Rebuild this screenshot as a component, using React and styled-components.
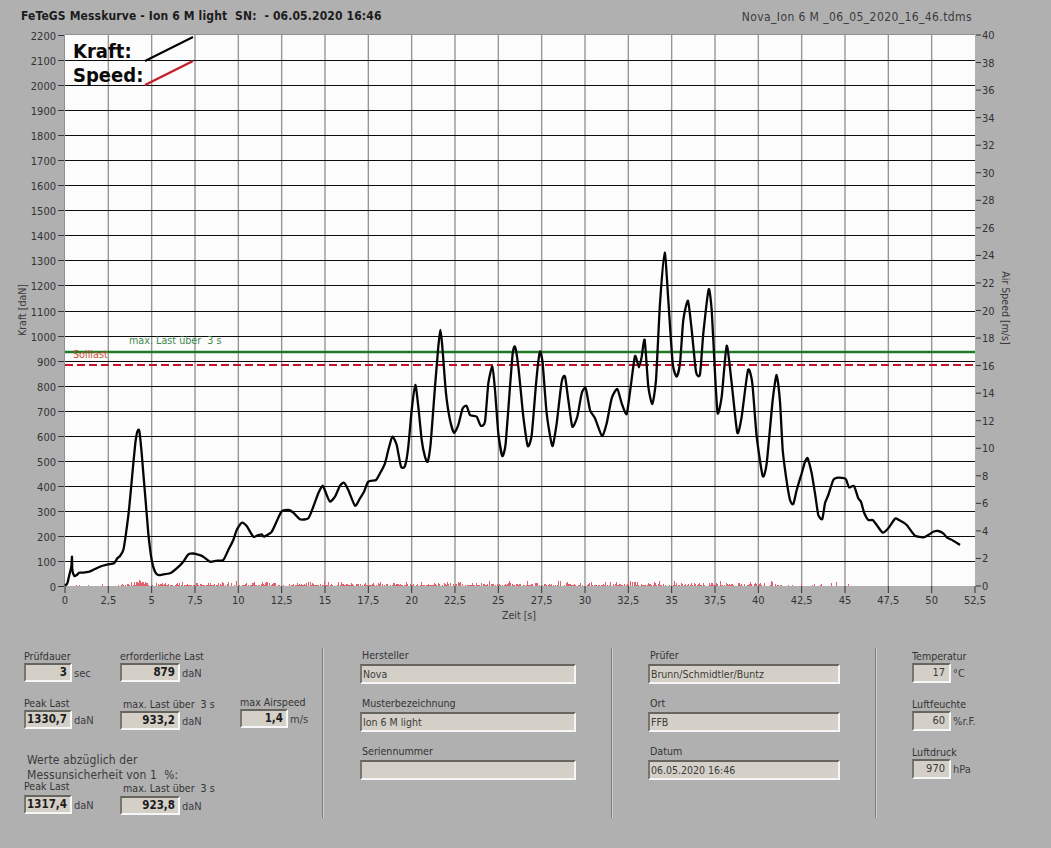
import React from "react";
import styled, { createGlobalStyle } from "styled-components";

const FONT = `"DejaVu Sans Condensed", "DejaVu Sans", Tahoma, sans-serif`;

const Global = createGlobalStyle`
  html, body { margin: 0; padding: 0; background: #b0b0b0; }
  body { font-family: ${FONT}; overflow: hidden; }
`;

const Page = styled.div`
  position: relative;
  width: 1051px;
  height: 848px;
  background: #b0b0b0;
  color: #2c2c2c;
  overflow: hidden;
`;
const Title = styled.div`
  position: absolute;
  left: 21px;
  top: 8px;
  font-size: 12px;
  line-height: 16px;
  font-weight: 700;
  color: #1c1c1c;
  white-space: pre;
  letter-spacing: 0.14px;
`;
const FileName = styled.div`
  position: absolute;
  right: 79px;
  top: 10px;
  font-size: 12px;
  line-height: 15px;
  color: #3a3a40;
  white-space: pre;
  letter-spacing: 0.4px;
`;
const ChartSvg = styled.svg`
  position: absolute;
  left: 0;
  top: 0;
  display: block;
`;
const TickText = styled.text`
  font-family: ${FONT};
  font-size: 11px;
  fill: #333;
`;
const AxisTitle = styled.text`
  font-family: ${FONT};
  font-size: 10.5px;
  fill: #3a3a3a;
`;
const LegendText = styled.text`
  font-family: ${FONT};
  font-size: 20px;
  font-weight: 700;
  fill: #0a0a0a;
`;
const Marker = styled.text`
  font-family: ${FONT};
  font-size: 10.7px;
  fill: ${(p) => p.$color};
  white-space: pre;
`;

const Field = styled.div`
  position: absolute;
  left: ${(p) => p.$x}px;
  top: ${(p) => p.$y}px;
  display: grid;
  grid-template-columns: ${(p) => p.$w}px auto;
  column-gap: 2px;
`;
const FieldLabel = styled.div`
  grid-column: 1 / 3;
  font-size: 10.6px;
  line-height: 13px;
  height: 13px;
  margin-left: ${(p) => p.$indent || 0}px;
  margin-bottom: ${(p) => p.$gap ?? 2}px;
  color: #333;
  white-space: pre;
`;
const ValueBox = styled.div`
  box-sizing: border-box;
  height: ${(p) => p.$h || 19}px;
  background: #d4d0c8;
  border-top: 2px solid #66665f;
  border-left: 2px solid #76766f;
  border-right: 2px solid #f6f6f6;
  border-bottom: 2px solid #f6f6f6;
  padding: ${(p) => (p.$text ? "1px 0 0 1px" : p.$bold ? "0 3px 0 0" : "0 4px 0 0")};
  text-align: ${(p) => (p.$text ? "left" : "right")};
  font-size: ${(p) => (p.$bold ? 11.5 : p.$text ? 10.5 : 11)}px;
  font-weight: ${(p) => (p.$bold ? 700 : 400)};
  line-height: ${(p) => (p.$h || 19) - 5}px;
  color: ${(p) => (p.$bold ? "#1c1c1c" : "#3a3a3a")};
  white-space: pre;
`;
const Unit = styled.div`
  align-self: center;
  margin-top: ${(p) => (p.$drop ? 3 : 1)}px;
  font-size: 11px;
  line-height: 14px;
  color: #3c3c44;
  white-space: pre;
`;
const Note = styled.div`
  position: absolute;
  left: 27px;
  top: 753px;
  font-size: 12px;
  line-height: 14.5px;
  color: #3c3a3c;
  white-space: pre;
  letter-spacing: 0.12px;
`;
const Divider = styled.div`
  position: absolute;
  left: ${(p) => p.$x}px;
  top: 648px;
  width: 1px;
  height: 170px;
  background: #7e7e7e;
  border-right: 1px solid #cfcfcf;
`;

const X0 = 65, X1 = 975, Y0 = 586, Y1 = 35;
const PX = 910 / 52.5;
const PY = 551 / 2200;

const z = (ox, oy, arr) => arr.map(([a, b]) => [ox + a / 3, oy + b / 3]);
const curve = [
  ...z(40, 320, [[75,797],[82,790],[88,765],[94,740],[96,710],[97,750],[103,768],[110,765],[118,758],[130,758],[148,755],[165,747],[185,738],[205,733],[222,730],[232,715],[240,708],[250,690],[258,640],[268,560],[278,450],[286,370],[292,335],[298,332],[305,400],[315,520],[325,640],[335,720],[345,755],[355,765],[370,763],[390,760],[410,745],[430,725],[445,703],[460,700],[475,704],[490,710],[510,725],[530,722],[550,720],[565,690],[580,660],[590,630],[605,608],[620,618],[640,650],[655,645],[665,643],[672,650],[695,635],[712,600],[725,574],[745,570],[760,578],[780,598],[805,595],[820,560],[835,520],[848,497],[860,525],[870,545],[885,530],[900,497]]),
  ...z(340, 320, [[12,488],[25,510],[45,557],[60,535],[72,515],[85,485],[108,480],[120,460],[135,430],[145,390],[157,350],[170,375],[183,440],[195,438],[205,380],[215,270],[226,195],[235,260],[245,360],[255,410],[263,425],[272,370],[285,200],[295,80],[301,30],[307,80],[318,220],[330,300],[342,338],[355,315],[368,265],[380,258],[390,285],[410,290],[422,317],[435,305],[445,190],[457,140],[465,210],[475,340],[487,408],[497,370],[510,200],[518,100],[525,80],[535,140],[550,290],[563,378],[575,345],[590,170],[600,95],[608,130],[620,280],[637,378],[650,310],[665,185],[675,170],[685,240],[697,320],[712,290],[725,220],[737,205],[750,270],[765,295],[786,348],[800,310],[815,235],[832,207],[845,250],[860,282]]),
  ...z(620, 240, [[32,440],[45,348],[57,382],[65,350],[74,300],[85,440],[97,492],[108,420],[120,190],[134,38],[145,180],[158,370],[170,410],[180,370],[190,240],[204,182],[215,270],[228,395],[240,403],[250,280],[266,148],[275,210],[285,400],[293,520],[305,470],[320,317],[335,430],[352,578],[365,530],[384,390],[397,430],[410,590],[428,708],[440,670],[458,480],[470,405]]),
  ...z(780, 380, [[0,65],[8,210],[18,290],[30,360],[40,372],[50,330],[65,280],[75,245],[83,235],[95,280],[105,340],[115,405],[127,417],[135,370],[145,345],[160,300],[175,293],[197,297],[207,322],[222,318],[235,355],[243,365],[253,400],[265,420],[278,420],[290,435],[308,458],[325,445],[345,416],[357,420],[380,435],[405,467],[430,472],[445,465],[460,455],[475,453],[490,460],[500,472],[520,482],[540,495]]),
];
const smooth = (pts) => {
  const k = 0.1;
  let d = `M${pts[0][0].toFixed(1)} ${pts[0][1].toFixed(1)}`;
  for (let i = 0; i < pts.length - 1; i++) {
    const p0 = pts[Math.max(i - 1, 0)], p1 = pts[i], p2 = pts[i + 1], p3 = pts[Math.min(i + 2, pts.length - 1)];
    const c1 = [p1[0] + (p2[0] - p0[0]) * k, p1[1] + (p2[1] - p0[1]) * k];
    const c2 = [p2[0] - (p3[0] - p1[0]) * k, p2[1] - (p3[1] - p1[1]) * k];
    d += `C${c1[0].toFixed(1)} ${c1[1].toFixed(1)} ${c2[0].toFixed(1)} ${c2[1].toFixed(1)} ${p2[0].toFixed(1)} ${p2[1].toFixed(1)}`;
  }
  return d;
};
const curveD = smooth(curve);

let seed = 1234;
const rnd = () => ((seed = (seed * 16807) % 2147483647) / 2147483647);
let noiseD = "";
for (let x = 76; x < 850; x++) {
  const fade = x < 118 ? 0.2 : x > 760 ? 0.3 : 1;
  if (rnd() > 0.72 * fade) continue;
  const boost = x > 130 && x < 150 ? 3 : 0;
  const h = 1 + Math.floor(rnd() * rnd() * 5) + (rnd() < 0.5 ? boost : 0);
  noiseD += `M${x + 0.5} ${Y0}V${Y0 - h}`;
}

const fmtX = (v) => String(v).replace(".", ",");

function Chart() {
  const ys = [];
  for (let v = 0; v <= 2200; v += 100) ys.push(v);
  const rs = [];
  for (let v = 0; v <= 40; v += 2) rs.push(v);
  const xs = [];
  for (let v = 0; v <= 52.5; v += 2.5) xs.push(v);
  return (
    <ChartSvg width="1051" height="640" viewBox="0 0 1051 640">
      <rect x={X0} y={Y1} width={X1 - X0} height={Y0 - Y1} fill="#fcfcfc" />
      <line x1={X0} x2={X1} y1={Y1 - 0.5} y2={Y1 - 0.5} stroke="#8f8f8f" />
      {xs.slice(1, -1).map((v) => (
        <line key={v} x1={X0 + v * PX} x2={X0 + v * PX} y1={Y1} y2={Y0} stroke="#989898" strokeWidth="1.4" />
      ))}
      <line x1={X0 - 0.5} x2={X0 - 0.5} y1={Y1} y2={Y0} stroke="#8f8f8f" />
      {ys.slice(1, -1).map((v) => {
        const y = Math.round(Y0 - v * PY) + 0.5;
        return <line key={v} x1={X0} x2={X1} y1={y} y2={y} stroke="#0c0c0c" strokeWidth="1.1" />;
      })}
      {ys.map((v) => {
        const y = Math.round(Y0 - v * PY) + 0.5;
        return (
          <g key={v}>
            <line x1={58} x2={64} y1={y} y2={y} stroke="#333" />
            <TickText x={56} y={y + 4} textAnchor="end">{v}</TickText>
          </g>
        );
      })}
      {rs.map((v) => {
        const y = Y0 - v * (551 / 40);
        return (
          <g key={v}>
            <line x1={976} x2={981} y1={y} y2={y} stroke="#333" />
            <TickText x={982} y={y + 4}>{v}</TickText>
          </g>
        );
      })}
      {xs.map((v) => {
        const x = X0 + v * PX;
        return (
          <g key={v}>
            <line x1={x} x2={x} y1={Y0} y2={593} stroke="#333" />
            <TickText x={x} y={604} textAnchor="middle">{fmtX(v)}</TickText>
          </g>
        );
      })}
      <path d={noiseD} stroke="#e0606c" strokeWidth="1" fill="none" />
      <line x1={X0} x2={X1} y1={352} y2={352} stroke="#1d7a26" strokeWidth="2.6" />
      <line x1={X0} x2={X1} y1={365} y2={365} stroke="#c5122b" strokeWidth="2.2" strokeDasharray="8 4" />
      <Marker x={129} y={344} $color="#3f8a4c">{"max. Last über  3 s"}</Marker>
      <Marker x={73} y={358} $color="#c9502f">Solllast</Marker>
      <path d={curveD} stroke="#050505" strokeWidth="2.3" fill="none" strokeLinejoin="round" />
      <LegendText x={73} y={58}>Kraft:</LegendText>
      <LegendText x={73} y={82}>Speed:</LegendText>
      <line x1={145} y1={61} x2={193} y2={37} stroke="#000" strokeWidth="2" />
      <line x1={145} y1={85} x2={193} y2={61} stroke="#c4202c" strokeWidth="2.4" />
      <AxisTitle transform="translate(26 310) rotate(-90)" textAnchor="middle">Kraft [daN]</AxisTitle>
      <AxisTitle transform="translate(1002 308) rotate(90)" textAnchor="middle">Air Speed [m/s]</AxisTitle>
      <AxisTitle x={519} y={619} textAnchor="middle">Zeit [s]</AxisTitle>
    </ChartSvg>
  );
}

const numeric = [
  { x: 24, y: 650, w: 48, label: "Prüfdauer", value: "3", unit: "sec", bold: true },
  { x: 120, y: 650, w: 60, label: "erforderliche Last", value: "879", unit: "daN", bold: true },
  { x: 24, y: 697, w: 48, label: "Peak Last", value: "1330,7", unit: "daN", bold: true },
  { x: 120, y: 698, w: 60, indent: 3, label: "max. Last über  3 s", value: "933,2", unit: "daN", bold: true },
  { x: 240, y: 696, w: 48, label: "max Airspeed", value: "1,4", unit: "m/s", bold: true },
  { x: 24, y: 780, w: 48, gap: 2, label: "Peak Last", value: "1317,4", unit: "daN", bold: true },
  { x: 120, y: 782, w: 60, gap: 1, indent: 3, label: "max. Last über  3 s", value: "923,8", unit: "daN", bold: true },
  { x: 912, y: 650, w: 39, h: 20, label: "Temperatur", value: "17", unit: "°C" },
  { x: 912, y: 698, w: 39, h: 20, label: "Luftfeuchte", value: "60", unit: "%r.F." },
  { x: 912, y: 746, w: 39, h: 20, label: "Luftdruck", value: "970", unit: "hPa" },
];
const texts = [
  { x: 360, y: 649, w: 216, label: "Hersteller", value: "Nova" },
  { x: 360, y: 697, w: 216, label: "Musterbezeichnung", value: "Ion 6 M light" },
  { x: 360, y: 745, w: 216, label: "Seriennummer", value: "" },
  { x: 648, y: 649, w: 192, label: "Prüfer", value: "Brunn/Schmidtler/Buntz" },
  { x: 648, y: 697, w: 192, label: "Ort", value: "FFB" },
  { x: 648, y: 745, w: 192, label: "Datum", value: "06.05.2020 16:46" },
];

export default function App() {
  return (
    <Page>
      <Global />
      <Chart />
      <Title>{"FeTeGS Messkurve - Ion 6 M light  SN:  - 06.05.2020 16:46"}</Title>
      <FileName>Nova_Ion 6 M _06_05_2020_16_46.tdms</FileName>
      {numeric.map((f) => (
        <Field key={f.label + f.y} $x={f.x} $y={f.y} $w={f.w}>
          <FieldLabel $indent={f.indent} $gap={f.gap ?? 0}>{f.label}</FieldLabel>
          <ValueBox $bold={f.bold} $h={f.h}>{f.value}</ValueBox>
          <Unit $drop={f.bold}>{f.unit}</Unit>
        </Field>
      ))}
      {texts.map((f) => (
        <Field key={f.label} $x={f.x} $y={f.y} $w={f.w}>
          <FieldLabel $indent={2}>{f.label}</FieldLabel>
          <ValueBox $text $h={20}>{f.value}</ValueBox>
        </Field>
      ))}
      <Note>{"Werte abzüglich der\nMessunsicherheit von 1  %:"}</Note>
      <Divider $x={322} />
      <Divider $x={611} />
      <Divider $x={875} />
    </Page>
  );
}
